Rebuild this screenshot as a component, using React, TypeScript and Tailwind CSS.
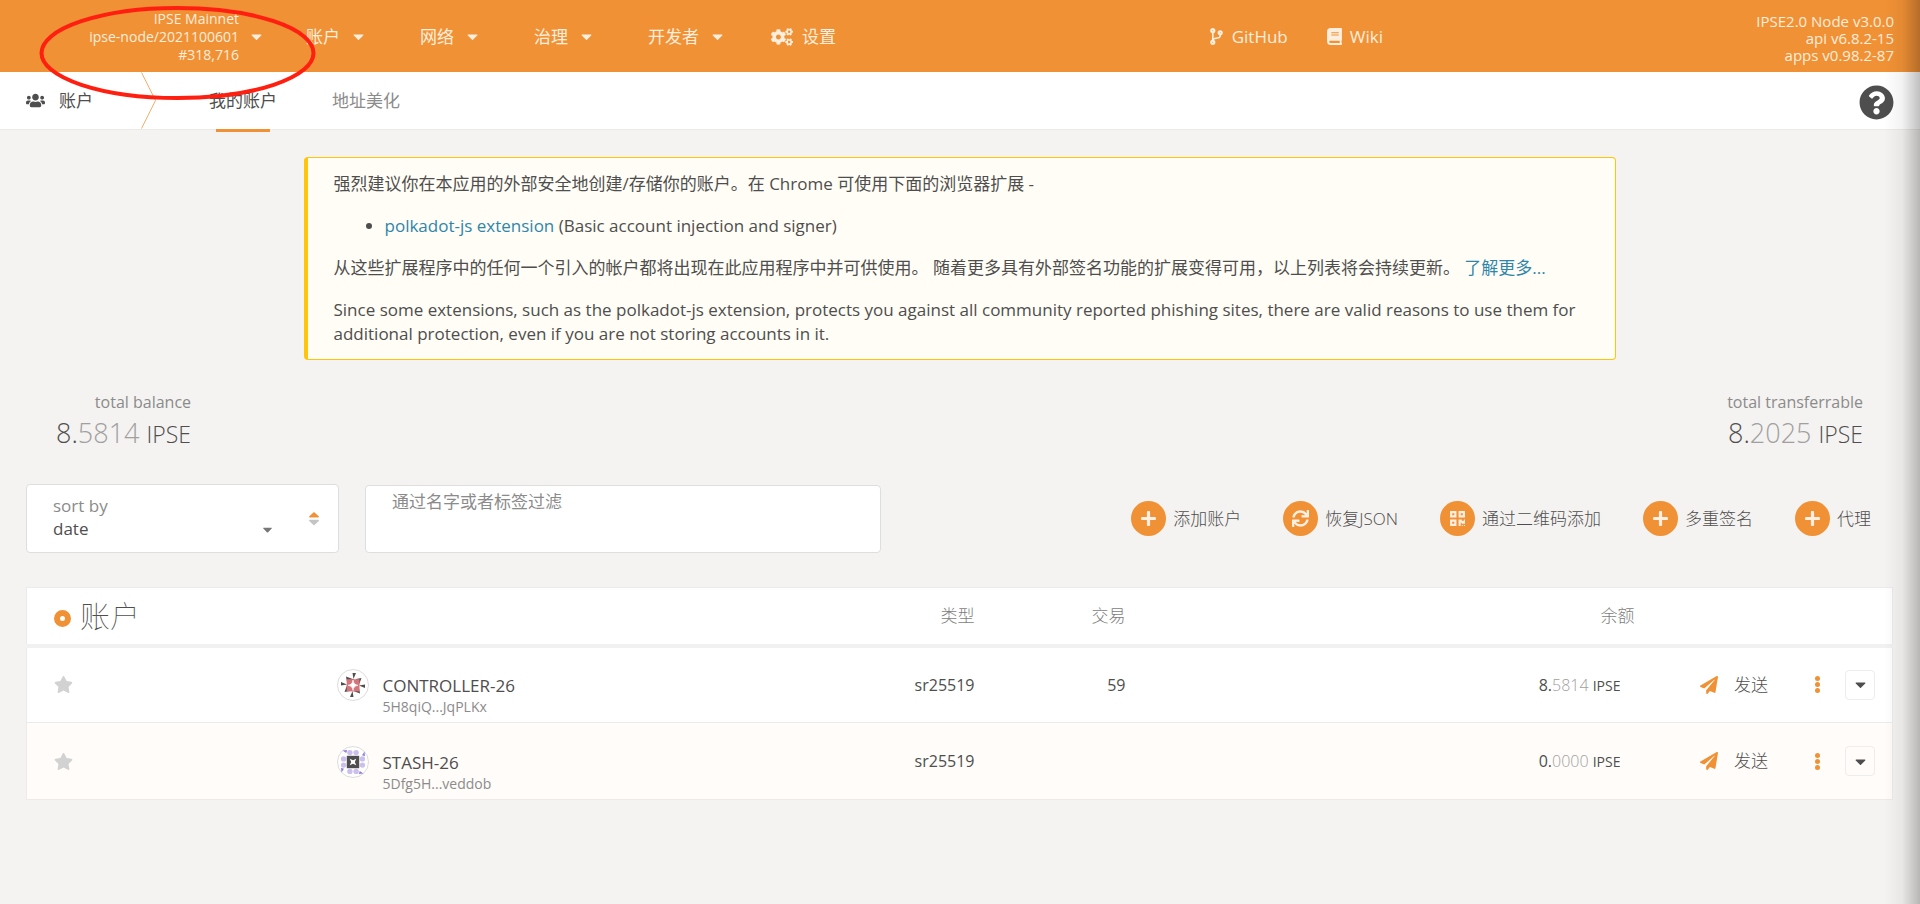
import React from 'react';
import { FaUsers, FaCogs, FaCodeBranch, FaBook, FaQuestionCircle, FaCaretDown, FaPlus, FaSync, FaQrcode, FaStar, FaPaperPlane } from 'react-icons/fa';

function MenuItem({ label }: { label: string }) {
  return (
    <button className="flex items-center gap-[10px]">
      {label}
      <FaCaretDown size={17} />
    </button>
  );
}

function Header() {
  return (
    <header className="flex h-[72px] items-center bg-[#f19135] text-[#fdeedd]">
      <button className="flex w-[265px] items-center justify-end gap-[9px] pt-px text-right text-[14px] leading-[18px]">
        <span>
          IPSE Mainnet
          <br />
          ipse-node/2021100601
          <br />
          #318,716
        </span>
        <FaCaretDown size={17} />
      </button>
      <nav className="ml-[41px] flex items-center gap-[53px] pt-px">
        <MenuItem label="账户" />
        <MenuItem label="网络" />
        <MenuItem label="治理" />
        <MenuItem label="开发者" />
        <a href="#settings" className="-ml-2 flex items-center gap-[9px]">
          <FaCogs size={22} />
          设置
        </a>
      </nav>
      <div className="ml-auto flex items-center gap-[38px] pt-px">
        <a href="#github" className="flex items-center gap-[7px]">
          <FaCodeBranch size={17} />
          GitHub
        </a>
        <a href="#wiki" className="flex items-center gap-[7px]">
          <FaBook size={17} />
          Wiki
        </a>
      </div>
      <div className="ml-[337px] w-[200px] pr-[26px] pt-1 text-right text-[15px] leading-[17px]">
        IPSE2.0 Node v3.0.0
        <br />
        api v6.8.2-15
        <br />
        apps v0.98.2-87
      </div>
    </header>
  );
}

function Tabs() {
  return (
    <div className="flex h-[58px] items-stretch border-b border-[#eceae8] bg-white">
      <div className="flex w-[141px] items-center gap-[14px] pl-[26px]">
        <FaUsers size={19} />
        账户
      </div>
      <svg width="16" height="57" viewBox="0 0 16 57" fill="none" stroke="#f5ad68">
        <path d="M0.5 0.5 L14.5 28.5 L0.5 56.5" />
      </svg>
      <nav className="ml-[52px] flex gap-[55px]">
        <a href="#mine" className="relative flex items-center">
          我的账户
          <span className="absolute inset-x-[7px] -bottom-[3px] h-[3px] bg-[#f19135]" />
        </a>
        <a href="#vanity" className="flex items-center text-[#8b8b8b]">
          地址美化
        </a>
      </nav>
      <button aria-label="帮助" className="ml-auto mr-[26px] pt-[3px]">
        <FaQuestionCircle size={35} />
      </button>
    </div>
  );
}

function Notice() {
  return (
    <article className="mx-auto mt-[27px] flex w-[1312px] max-w-full flex-col gap-[18px] rounded border border-l-4 border-[#ffc40c] bg-[#fffdf5] pb-[13px] pl-[26px] pr-4 pt-[14px] leading-6">
      <p>强烈建议你在本应用的外部安全地创建/存储你的账户。在 Chrome 可使用下面的浏览器扩展 -</p>
      <ul className="list-disc pl-[51px]">
        <li>
          <a href="#extension" className="text-[#2e86ab]">polkadot-js extension</a> (Basic account injection and signer)
        </li>
      </ul>
      <p>
        从这些扩展程序中的任何一个引入的帐户都将出现在此应用程序中并可供使用。 随着更多具有外部签名功能的扩展变得可用，以上列表将会持续更新。{' '}
        <a href="#more" className="text-[#2e86ab]">了解更多...</a>
      </p>
      <p>
        Since some extensions, such as the polkadot-js extension, protects you against all community reported phishing sites, there are valid reasons to use them for additional protection, even if you are not storing accounts in it.
      </p>
    </article>
  );
}

function Total({ label, whole, decimals }: { label: string; whole: string; decimals: string }) {
  return (
    <div className="text-right">
      <div className="text-[16px] leading-6 text-[#8b8b8b]">{label}</div>
      <div className="text-[27px] font-light leading-[38px]">
        {whole}.<span className="text-[#a0a0a0]">{decimals}</span> <span className="text-[23px]">IPSE</span>
      </div>
    </div>
  );
}

function Action({ icon, label }: { icon: React.ReactNode; label: string }) {
  return (
    <button className="flex items-center gap-[7px]">
      <span className="flex size-[35px] items-center justify-center rounded-full bg-[#f19135] text-[#fdf0e3]">{icon}</span>
      {label}
    </button>
  );
}

function Toolbar() {
  return (
    <div className="mt-[31px] flex items-end">
      <div className="flex h-[69px] w-[313px] rounded border border-[#dededd] bg-white">
        <label className="flex w-[262px] flex-col pl-[26px] pt-[9px]">
          <span className="leading-6 text-[#8b8b8b]">sort by</span>
          <span className="flex items-center">
            <select className="grow appearance-none leading-[22px]">
              <option>date</option>
            </select>
            <FaCaretDown size={15} className="mr-[14px] text-[#777]" />
          </span>
        </label>
        <button aria-label="切换排序方向" className="flex grow items-center justify-center">
          <svg width="10" height="14" viewBox="0 0 10 14">
            <path d="M5 0 L10 4.6 Q10 5.6 9 5.6 H1 Q0 5.6 0 4.6Z" fill="#f19135" />
            <path d="M5 13.4 L10 8.8 Q10 7.8 9 7.8 H1 Q0 7.8 0 8.8Z" fill="#c4c4c4" />
          </svg>
        </button>
      </div>
      <div className="ml-[26px] h-[68px] w-[516px] rounded border border-[#dededd] bg-white">
        <input
          aria-label="过滤"
          placeholder="通过名字或者标签过滤"
          className="w-full px-[26px] py-1 leading-6 outline-none placeholder:text-[#8b8b8b]"
        />
      </div>
      <div className="ml-auto mr-[22px] flex h-[69px] items-center gap-[42px] font-light">
        <Action icon={<FaPlus size={17} />} label="添加账户" />
        <Action icon={<FaSync size={17} />} label="恢复JSON" />
        <Action icon={<FaQrcode size={17} />} label="通过二维码添加" />
        <Action icon={<FaPlus size={17} />} label="多重签名" />
        <Action icon={<FaPlus size={17} />} label="代理" />
      </div>
    </div>
  );
}

function RedIcon() {
  return (
    <svg width="32" height="32" viewBox="0 0 32 32">
      <circle cx="16" cy="16" r="15.5" fill="#fff" stroke="#dcdcdc" />
      <g fill="#4e4e4e">
        {[0, 90, 180, 270].map((angle) => (
          <g key={angle} transform={`rotate(${angle} 16 16)`}>
            <path d="M15.5 4 L19 4 L16.5 10Z" />
            <path d="M9 7.500 L17 10.500 L10 13Z" />
          </g>
        ))}
      </g>
      <rect x="9.7" y="10.2" width="12.8" height="12.2" fill="#d4747b" />
      <path d="M16 11 Q16.5 15.8 21 16.3 Q16.5 16.8 16 21.5 Q15.5 16.8 11 16.3 Q15.5 15.8 16 11Z" fill="#fff" stroke="#fff" strokeWidth="0.6" />
    </svg>
  );
}

function PurpleIcon() {
  return (
    <svg width="32" height="32" viewBox="0 0 32 32">
      <circle cx="16" cy="16" r="15.5" fill="#fff" stroke="#dcdcdc" />
      {[0, 90, 180, 270].map((angle) => (
        <g key={angle} transform={`rotate(${angle} 16 16)`}>
          <circle cx="12.9" cy="6.6" r="2.7" fill="#cbbfee" />
          <circle cx="19.1" cy="6.6" r="2.7" fill="#cbbfee" />
          <path d="M5.5 4.5 L10.2 4 L9.2 7Z" fill="#9481dc" />
        </g>
      ))}
      <rect x="9.8" y="9.8" width="12.4" height="12.4" fill="#4e4e4e" />
      <path d="M12.7 12.7 L16 14.2 L19.3 12.7 L17.8 16 L19.3 19.3 L16 17.8 L12.7 19.3 L14.2 16Z" fill="#fff" />
    </svg>
  );
}

interface Account {
  name: string;
  address: string;
  icon: React.ReactNode;
  transactions: string;
  whole: string;
  decimals: string;
}

const ACCOUNTS: Account[] = [
  { name: 'CONTROLLER-26', address: '5H8qiQ...JqPLKx', icon: <RedIcon />, transactions: '59', whole: '8', decimals: '5814' },
  { name: 'STASH-26', address: '5Dfg5H...veddob', icon: <PurpleIcon />, transactions: '', whole: '0', decimals: '0000' },
];

function AccountsTable() {
  return (
    <table className="mt-[34px] w-full table-fixed border-collapse border border-[#ecebea] bg-white">
      <colgroup>
        <col className="w-[310px]" />
        <col />
        <col className="w-[290px]" />
        <col className="w-[151px]" />
        <col className="w-[509px]" />
        <col className="w-[258px]" />
      </colgroup>
      <thead>
        <tr className="h-[58px] border-b-4 border-[#f2f1f1] text-[#7d7d7d]">
          <th colSpan={2} className="pl-[27px] text-left font-normal">
            <span className="flex items-center gap-[9px]">
              <span className="mt-[6px] size-[17px] rounded-full border-[6px] border-[#f19135]" />
              <span className="text-[30px] font-thin leading-8 text-[#4e4e4e]">账户</span>
            </span>
          </th>
          <th className="text-right font-light">类型</th>
          <th className="text-right font-light">交易</th>
          <th className="text-right font-light">余额</th>
          <th />
        </tr>
      </thead>
      <tbody>
        {ACCOUNTS.map((account) => (
          <tr key={account.name} className="h-[77px] border-b border-[#ecebea] even:bg-[#fffcf9]">
            <td className="pl-[27px]">
              <button aria-label="收藏" className="flex text-[#d2d2d2]">
                <FaStar size={19} />
              </button>
            </td>
            <td className="pt-[17px]">
              <div className="flex items-start gap-[14px]">
                {account.icon}
                <div className="pt-[6px]">
                  <div className="leading-[22px]">{account.name}</div>
                  <div className="text-[14px] leading-5 text-[#8b8b8b]">{account.address}</div>
                </div>
              </div>
            </td>
            <td className="text-right text-[16px]">sr25519</td>
            <td className="text-right text-[16px]">{account.transactions}</td>
            <td className="pr-[14px] text-right text-[16px]">
              {account.whole}.<span className="font-light text-[#a0a0a0]">{account.decimals}</span>{' '}
              <span className="text-[14px]">IPSE</span>
            </td>
            <td>
              <div className="flex items-center justify-end pr-[17px]">
                <button className="flex items-center gap-4 font-light">
                  <FaPaperPlane size={18} className="text-[#f19135]" />
                  发送
                </button>
                <button aria-label="更多" className="ml-[47px]">
                  <svg width="5" height="17" viewBox="0 0 5 17" fill="#f19135">
                    <circle cx="2.5" cy="2.5" r="2.5" />
                    <circle cx="2.5" cy="8.5" r="2.5" />
                    <circle cx="2.5" cy="14.5" r="2.5" />
                  </svg>
                </button>
                <button aria-label="展开" className="ml-[25px] flex size-[30px] items-center justify-center rounded border border-[#eeeded]">
                  <FaCaretDown size={17} />
                </button>
              </div>
            </td>
          </tr>
        ))}
      </tbody>
    </table>
  );
}

export default function App() {
  return (
    <div className="relative min-h-screen overflow-hidden bg-[#f4f3f1] font-['Open_Sans','Noto_Sans_CJK_SC',sans-serif] text-[17px] text-[#4e4e4e]">
      <Header />
      <Tabs />
      <main className="pl-[26px] pr-[27px]">
        <Notice />
        <div className="mt-[30px] flex justify-between px-[30px]">
          <Total label="total balance" whole="8" decimals="5814" />
          <Total label="total transferrable" whole="8" decimals="2025" />
        </div>
        <Toolbar />
        <AccountsTable />
      </main>
      <svg className="pointer-events-none absolute left-[39px] top-[6px]" width="278" height="96" viewBox="0 0 278 96" fill="none" stroke="#ff1f10" strokeWidth="4">
        <ellipse cx="138.5" cy="47" rx="136" ry="45" />
      </svg>
      <div className="pointer-events-none absolute inset-y-0 right-0 w-9 bg-linear-to-r from-transparent via-black/5 to-black/25" />
    </div>
  );
}
